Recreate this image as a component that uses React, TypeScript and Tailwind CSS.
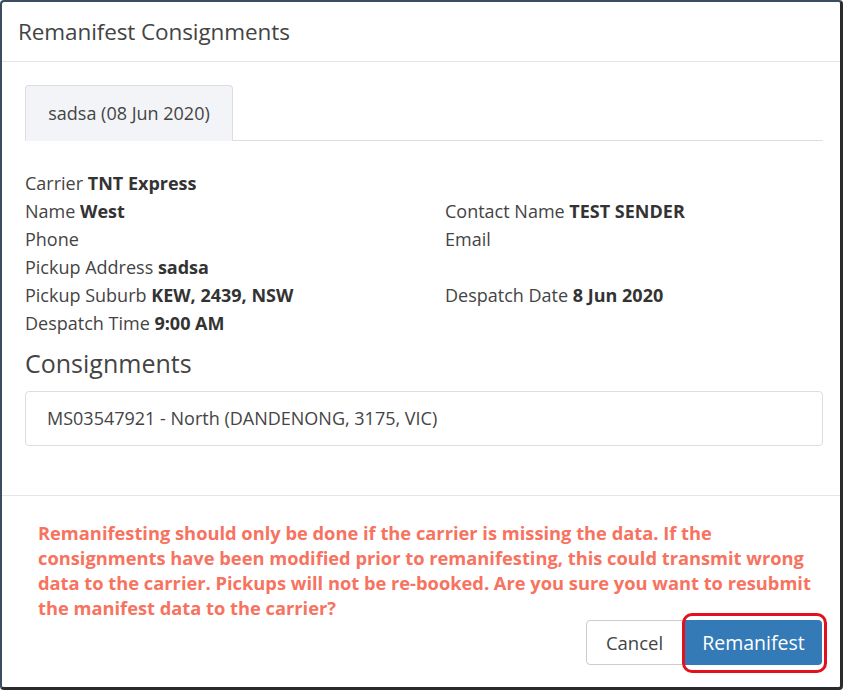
export default function App() {
  return (
    <div className="w-[845px] h-[692px] bg-white p-0" style={{ fontFamily: '"Open Sans", sans-serif' }}>
      <div className="w-[843px] h-[690px] flex flex-col rounded-[4px] border-2 border-[#3b4d5e] border-b-[3px] border-r-[3px] border-b-[#2b2b2b] border-r-[#2b2b2b] bg-white text-[#333]">
        {/* header */}
        <div className="h-[60px] flex items-center px-[16px] border-b border-[#e5e5e5]">
          <h4 className="text-[22.5px] text-[#444] tracking-[-0.1px]">Remanifest Consignments</h4>
        </div>

        {/* body */}
        <div className="px-[23px] pt-[23px] pb-0 h-[433px]">
          <div className="flex border-b border-[#ddd] w-[798px]">
            <div className="w-[208px] h-[56px] -mb-px flex items-center justify-center bg-[#f3f4f7] border border-[#ddd] border-b-transparent rounded-t-[4px] text-[18px] text-[#444]">
              sadsa (08 Jun 2020)
            </div>
          </div>

          <div className="grid grid-cols-[420px_1fr] mt-[28px] text-[18px] leading-[28px] text-[#444]">
            <div>Carrier <b className="text-[#333]">TNT Express</b></div>
            <div></div>
            <div>Name <b className="text-[#333]">West</b></div>
            <div>Contact Name <b className="text-[#333]">TEST SENDER</b></div>
            <div>Phone</div>
            <div>Email</div>
            <div>Pickup Address <b className="text-[#333]">sadsa</b></div>
            <div></div>
            <div>Pickup Suburb <b className="text-[#333]">KEW, 2439, NSW</b></div>
            <div>Despatch Date <b className="text-[#333]">8 Jun 2020</b></div>
            <div>Despatch Time <b className="text-[#333]">9:00 AM</b></div>
            <div></div>
          </div>

          <h3 className="mt-[11px] text-[25px] leading-[30px] text-[#444]">Consignments</h3>

          <div className="mt-[13px] w-[798px] h-[55px] flex items-center px-[21px] border border-[#ddd] rounded-[4px] text-[18px] text-[#444]">
            MS03547921 - North (DANDENONG, 3175, VIC)
          </div>
        </div>

        {/* footer */}
        <div className="flex-1 border-t border-[#e5e5e5] pt-[24px] pl-[36px] pr-[18px]">
          <p className="whitespace-nowrap text-[18.3px] leading-[25px] font-bold text-[#f7735f]">
            Remanifesting should only be done if the carrier is missing the data. If the<br />
            consignments have been modified prior to remanifesting, this could transmit wrong<br />
            data to the carrier. Pickups will not be re-booked. Are you sure you want to resubmit<br />
            the manifest data to the carrier?
          </p>
          <div className="flex justify-end mt-0">
            <button className="h-[45px] w-[97px] rounded-l-[4px] border border-[#ccc] bg-white text-[18.5px] text-[#444]">
              Cancel
            </button>
            <div className="relative ml-[2px]">
              <button className="h-[45px] w-[137px] rounded-r-[4px] bg-[#337ab7] text-[19.5px] text-white">
                Remanifest
              </button>
              <div className="absolute -left-[3px] -top-[7px] w-[145px] h-[60px] border-[3px] border-[#e3101d] rounded-[10px] pointer-events-none"></div>
            </div>
          </div>
        </div>
      </div>
    </div>
  );
}
